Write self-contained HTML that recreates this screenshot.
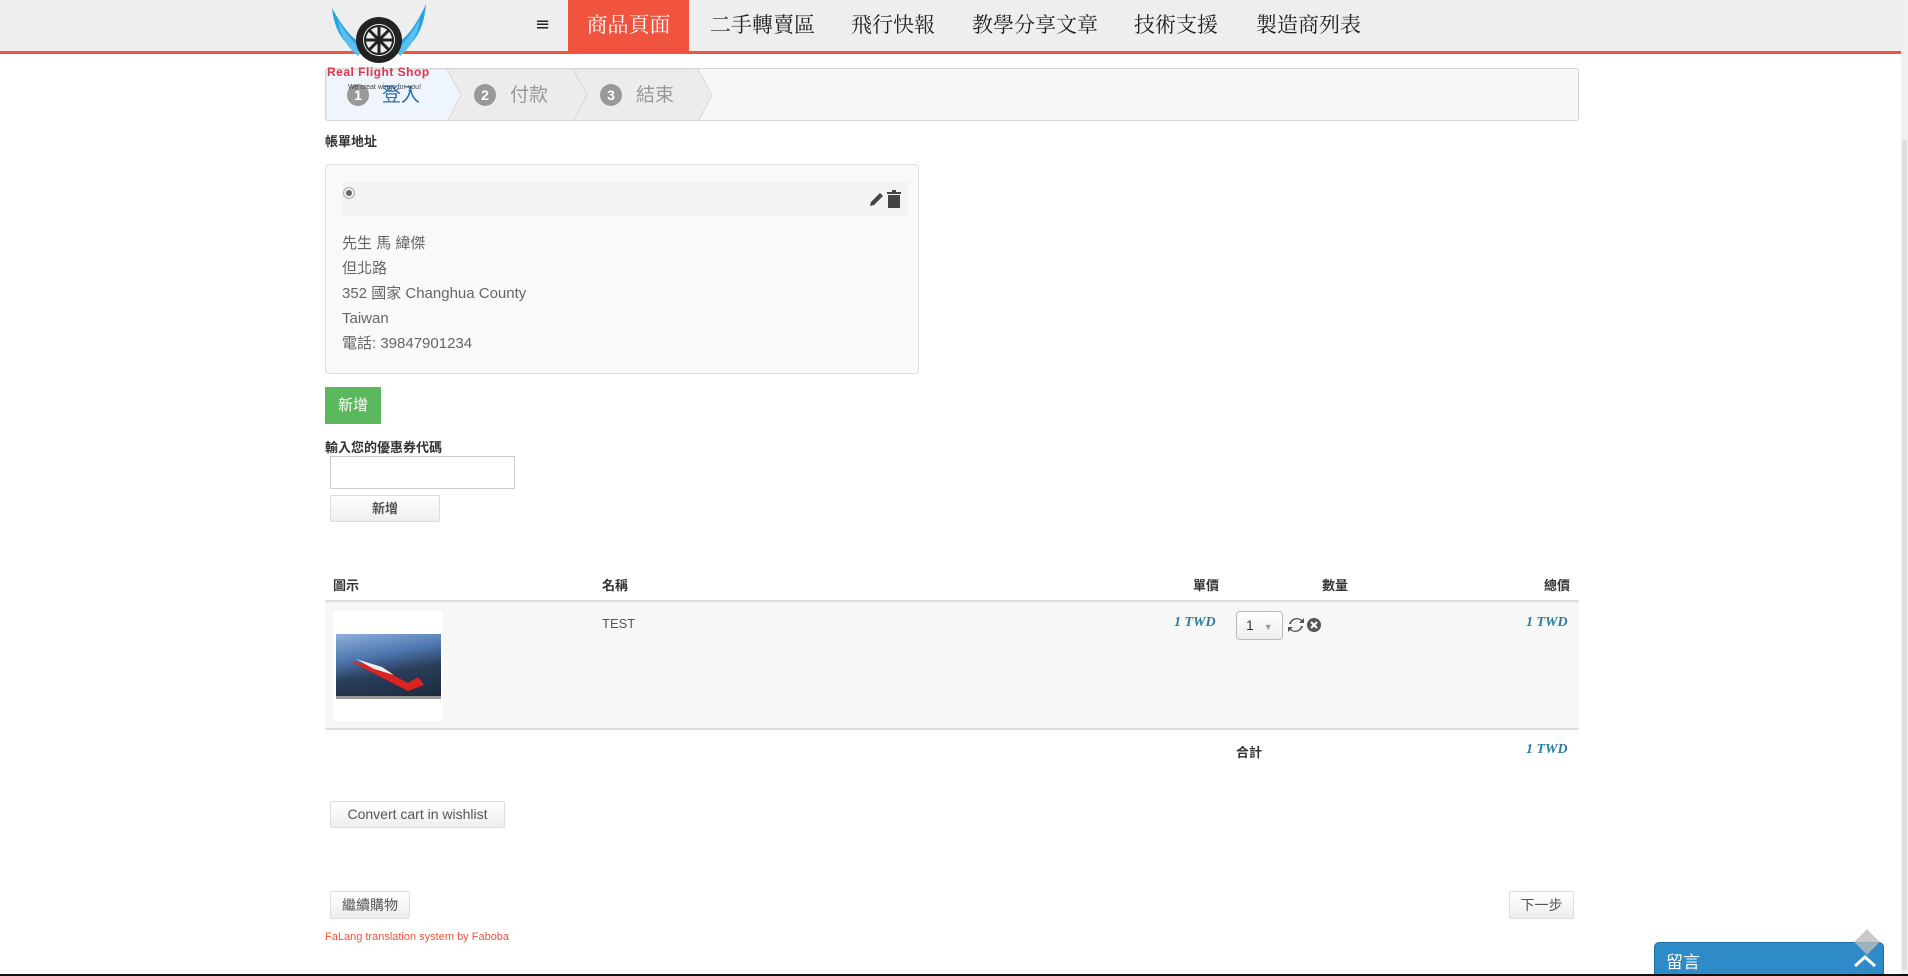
<!DOCTYPE html>
<html><head><meta charset="utf-8">
<style>
*{margin:0;padding:0;box-sizing:border-box}
body{width:1908px;height:976px;overflow:hidden;background:#fff;font-family:"Liberation Sans","Noto Sans CJK TC",sans-serif;color:#555;position:relative}
.abs{position:absolute}
.nav{left:0;top:0;width:1908px;height:54px;background:#eee;border-bottom:3px solid #f0533e}
.nav span{position:absolute;top:0;height:51px;line-height:50px;font-size:21px;color:#222;font-family:"Liberation Serif","Noto Serif CJK SC",serif}
.btn{position:absolute;background:linear-gradient(#fff,#eee);border:1px solid #ddd;border-radius:2px;font-size:14px;color:#555;text-align:center}
.b{font-weight:bold;color:#333;font-size:13px}
.twd{position:absolute;font-family:"Liberation Serif",serif;font-style:italic;font-weight:bold;color:#2a7fa0;font-size:14px}
</style></head><body>
<div class="abs nav">
<span style="left:535px;font-family:'DejaVu Sans';font-size:18px">≡</span>
<span style="left:568px;width:121px;background:#f0533e;color:#fff;text-align:center;top:0;height:51px">商品頁面</span>
<span style="left:710px">二手轉賣區</span>
<span style="left:851px">飛行快報</span>
<span style="left:972px">教學分享文章</span>
<span style="left:1134px">技術支援</span>
<span style="left:1256px">製造商列表</span>
</div>
<!-- logo -->
<svg class="abs" style="left:324px;top:0" width="110" height="90" viewBox="0 0 110 90">
<path d="M8 8 C20 30 30 40 40 45 L35 52 C20 45 10 30 8 8Z" fill="#29a3e0"/>
<path d="M14 20 C22 35 30 42 38 50 L34 56 C24 48 16 36 14 20Z" fill="#5bc0ef"/>
<path d="M102 4 C90 30 80 40 70 45 L75 52 C90 45 100 30 102 4Z" fill="#29a3e0"/>
<path d="M96 18 C88 35 80 42 72 50 L76 56 C86 48 94 36 96 18Z" fill="#5bc0ef"/>
<circle cx="55" cy="40" r="23" fill="#222"/><circle cx="55" cy="40" r="16" fill="#eee"/>
<circle cx="55" cy="40" r="14" fill="none" stroke="#222" stroke-width="2"/>
<path d="M55 26V54M41 40H69M45 30L65 50M65 30L45 50" stroke="#222" stroke-width="3"/>
<circle cx="55" cy="40" r="4" fill="#222"/>
</svg>
<!-- steps -->
<div class="abs" style="left:325px;top:68px;width:1254px;height:53px;background:#f7f7f7;border:1px solid #d6d6d6;border-radius:3px;overflow:hidden">
<svg class="abs" style="left:0;top:0" width="420" height="53">
<polygon points="247,0 372,0 386,26 372,53 247,53 261,26" fill="#ececec" stroke="#d8d8d8"/>
<polygon points="121,0 247,0 261,26 247,53 121,53 135,26" fill="#ececec" stroke="#d8d8d8"/>
<polygon points="0,0 121,0 135,26 121,53 0,53" fill="#eef5fd" stroke="#d8d8d8"/>
</svg>
</div>
<div class="abs" style="left:347px;top:84px;width:22px;height:22px;border-radius:11px;background:#999;color:#fff;font-weight:bold;font-size:14px;text-align:center;line-height:22px">1</div>
<div class="abs" style="left:382px;top:80px;font-size:19px;color:#2a6fa8">登入</div>
<div class="abs" style="left:474px;top:84px;width:22px;height:22px;border-radius:11px;background:#999;color:#fff;font-weight:bold;font-size:14px;text-align:center;line-height:22px">2</div>
<div class="abs" style="left:510px;top:80px;font-size:19px;color:#999">付款</div>
<div class="abs" style="left:600px;top:84px;width:22px;height:22px;border-radius:11px;background:#999;color:#fff;font-weight:bold;font-size:14px;text-align:center;line-height:22px">3</div>
<div class="abs" style="left:636px;top:80px;font-size:19px;color:#999">結束</div>
<div class="abs" style="left:327px;top:65px;font-size:12px;color:#e8334a;font-weight:bold;letter-spacing:0.5px">Real Flight Shop</div>
<div class="abs" style="left:348px;top:84px;font-size:7px;color:#444">We creat wings for you!</div>

<div class="abs b" style="left:325px;top:131px">帳單地址</div>
<div class="abs" style="left:325px;top:164px;width:594px;height:210px;background:#f9f9f9;border:1px solid #ddd;border-radius:4px">
<div class="abs" style="left:16px;top:17px;width:566px;height:34px;background:#f3f3f3"></div>
<div class="abs" style="left:17px;top:22px;width:12px;height:12px;border-radius:6px;border:1px solid #aaa;background:#eee"><div style="margin:2px;width:6px;height:6px;border-radius:3px;background:#666"></div></div>
<svg class="abs" style="left:542px;top:25px" width="34" height="18"><path d="M2 16L3 12L12 3L15 6L6 15Z" fill="#444"/><rect x="20" y="5" width="12" height="13" fill="#444"/><rect x="19" y="2" width="14" height="2" fill="#444"/><rect x="24" y="0" width="4" height="2" fill="#444"/></svg>
<div class="abs" style="left:16px;top:66px;font-size:15px;line-height:25px;color:#666">先生 馬 緯傑<br>但北路<br>352 國家 Changhua County<br>Taiwan<br>電話: 39847901234</div>
</div>
<div class="abs" style="left:325px;top:387px;width:56px;height:37px;background:#5cb85c;color:#fff;font-size:15px;text-align:center;line-height:37px">新增</div>
<div class="abs b" style="left:325px;top:437px">輸入您的優惠券代碼</div>
<div class="abs" style="left:330px;top:456px;width:185px;height:33px;border:1px solid #ccc"></div>
<div class="btn" style="left:330px;top:495px;width:110px;height:27px;line-height:25px;font-weight:bold;font-size:13px">新增</div>

<div class="abs b" style="left:333px;top:575px">圖示</div>
<div class="abs b" style="left:602px;top:575px">名稱</div>
<div class="abs b" style="left:1193px;top:575px">單價</div>
<div class="abs b" style="left:1322px;top:575px">數量</div>
<div class="abs b" style="left:1544px;top:575px">總價</div>
<div class="abs" style="left:325px;top:600px;width:1254px;height:130px;background:#f7f7f7;border-top:2px solid #ddd;border-bottom:2px solid #ddd"></div>
<div class="abs" style="left:333px;top:611px;width:110px;height:110px;background:#fff"></div>
<div class="abs" style="left:336px;top:634px;width:105px;height:65px;background:linear-gradient(170deg,#8fb0dc 0%,#4e76b0 35%,#2a3e5a 60%,#1d2a3c 100%);border-bottom:3px solid #999"></div>
<svg class="abs" style="left:348px;top:655px" width="80" height="40"><path d="M2 6 L30 12 L60 28 L70 22 L76 30 L60 36 Z" fill="#d22"/><path d="M8 4 L34 12 L46 20 L26 14Z" fill="#eee"/></svg>
<div class="abs" style="left:602px;top:616px;font-size:13px;color:#555">TEST</div>
<div class="twd" style="left:1174px;top:615px">1 TWD</div>
<div class="abs" style="left:1236px;top:611px;width:47px;height:29px;border:1px solid #bbb;border-radius:4px;background:linear-gradient(#fff,#eee);font-size:14px;line-height:27px;padding-left:9px;color:#333">1 <span style="font-size:9px;color:#999;margin-left:6px">▼</span></div>
<svg class="abs" style="left:1287px;top:616px" width="36" height="18"><path d="M3 8a6 6 0 0 1 10-3l-2 2h5v-5l-2 2a8 8 0 0 0-13 4zM13 10a6 6 0 0 1-10 3l2-2h-5v5l2-2a8 8 0 0 0 13-4z" fill="#555" transform="translate(1,0)"/><circle cx="27" cy="9" r="7" fill="#555"/><path d="M24 6l6 6M30 6l-6 6" stroke="#fff" stroke-width="2"/></svg>
<div class="twd" style="left:1526px;top:615px">1 TWD</div>
<div class="abs b" style="left:1236px;top:742px">合計</div>
<div class="twd" style="left:1526px;top:742px">1 TWD</div>

<div class="btn" style="left:330px;top:801px;width:175px;height:27px;line-height:25px;font-size:14px">Convert cart in wishlist</div>
<div class="btn" style="left:330px;top:891px;width:80px;height:28px;line-height:26px;font-size:14px">繼續購物</div>
<div class="btn" style="left:1509px;top:891px;width:65px;height:28px;line-height:26px;font-size:14px">下一步</div>
<div class="abs" style="left:325px;top:931px;font-size:11px;color:#f0533e">FaLang translation system by Faboba</div>

<div class="abs" style="left:1654px;top:942px;width:230px;height:34px;background:#2e8bc7;border-radius:5px 5px 0 0;border:1px solid #1f6fa5"></div>
<div class="abs" style="left:1666px;top:948px;color:#fff;font-size:17px">留言</div>
<svg class="abs" style="left:1853px;top:954px" width="24" height="14"><path d="M2 12L12 3L22 12" stroke="#fff" stroke-width="3" fill="none"/></svg>
<svg class="abs" style="left:1853px;top:928px" width="30" height="30"><rect x="5" y="5" width="18" height="18" fill="#bbb" opacity="0.8" transform="rotate(45 14 14)"/></svg>
<div class="abs" style="left:1901px;top:0;width:7px;height:976px;background:#f0f0f0"></div>
<div class="abs" style="left:1902px;top:140px;width:5px;height:830px;background:#ddd"></div>
<div class="abs" style="left:0;top:974px;width:1908px;height:2px;background:#111"></div>
</body></html>
